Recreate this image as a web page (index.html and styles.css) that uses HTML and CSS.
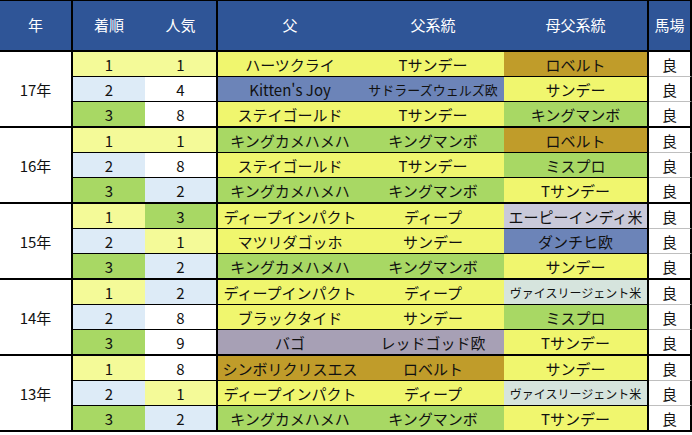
FILE: index.html
```html
<!DOCTYPE html>
<html lang="ja">
<head>
<meta charset="utf-8">
<link rel="stylesheet" href="styles.css">
</head>
<body>
<div class="sheet">
  <div class="head">
    <div class="cell w-year thick">年</div>
    <div class="cell w-rank">着順</div>
    <div class="cell w-pop thick">人気</div>
    <div class="cell w-sire">父</div>
    <div class="cell w-line">父系統</div>
    <div class="cell w-dam thick">母父系統</div>
    <div class="cell w-track thick">馬場</div>
  </div>

  <div class="group">
    <div class="year">17年</div>
    <div class="rows">
      <div class="row">
        <div class="cell w-rank c-ly">1</div>
        <div class="cell w-pop thick c-ly">1</div>
        <div class="cell w-sire c-y">ハーツクライ</div>
        <div class="cell w-line c-y">Tサンデー</div>
        <div class="cell w-dam thick c-gold">ロベルト</div>
        <div class="cell w-track thick">良</div>
      </div>
      <div class="row">
        <div class="cell w-rank c-lb">2</div>
        <div class="cell w-pop thick">4</div>
        <div class="cell w-sire c-blue">Kitten's Joy</div>
        <div class="cell w-line c-blue s13">サドラーズウェルズ欧</div>
        <div class="cell w-dam thick c-y">サンデー</div>
        <div class="cell w-track thick">良</div>
      </div>
      <div class="row">
        <div class="cell w-rank c-g">3</div>
        <div class="cell w-pop thick">8</div>
        <div class="cell w-sire c-y">ステイゴールド</div>
        <div class="cell w-line c-y">Tサンデー</div>
        <div class="cell w-dam thick c-g">キングマンボ</div>
        <div class="cell w-track thick">良</div>
      </div>
    </div>
  </div>

  <div class="group">
    <div class="year">16年</div>
    <div class="rows">
      <div class="row">
        <div class="cell w-rank c-ly">1</div>
        <div class="cell w-pop thick c-ly">1</div>
        <div class="cell w-sire c-g">キングカメハメハ</div>
        <div class="cell w-line c-g">キングマンボ</div>
        <div class="cell w-dam thick c-gold">ロベルト</div>
        <div class="cell w-track thick">良</div>
      </div>
      <div class="row">
        <div class="cell w-rank c-lb">2</div>
        <div class="cell w-pop thick">8</div>
        <div class="cell w-sire c-y">ステイゴールド</div>
        <div class="cell w-line c-y">Tサンデー</div>
        <div class="cell w-dam thick c-g">ミスプロ</div>
        <div class="cell w-track thick">良</div>
      </div>
      <div class="row">
        <div class="cell w-rank c-g">3</div>
        <div class="cell w-pop thick c-lb">2</div>
        <div class="cell w-sire c-g">キングカメハメハ</div>
        <div class="cell w-line c-g">キングマンボ</div>
        <div class="cell w-dam thick c-y">Tサンデー</div>
        <div class="cell w-track thick">良</div>
      </div>
    </div>
  </div>

  <div class="group">
    <div class="year">15年</div>
    <div class="rows">
      <div class="row">
        <div class="cell w-rank c-ly">1</div>
        <div class="cell w-pop thick c-g">3</div>
        <div class="cell w-sire c-y">ディープインパクト</div>
        <div class="cell w-line c-y">ディープ</div>
        <div class="cell w-dam thick c-lav">エーピーインディ米</div>
        <div class="cell w-track thick">良</div>
      </div>
      <div class="row">
        <div class="cell w-rank c-lb">2</div>
        <div class="cell w-pop thick c-ly">1</div>
        <div class="cell w-sire c-y">マツリダゴッホ</div>
        <div class="cell w-line c-y">サンデー</div>
        <div class="cell w-dam thick c-blue">ダンチヒ欧</div>
        <div class="cell w-track thick">良</div>
      </div>
      <div class="row">
        <div class="cell w-rank c-g">3</div>
        <div class="cell w-pop thick c-lb">2</div>
        <div class="cell w-sire c-g">キングカメハメハ</div>
        <div class="cell w-line c-g">キングマンボ</div>
        <div class="cell w-dam thick c-y">サンデー</div>
        <div class="cell w-track thick">良</div>
      </div>
    </div>
  </div>

  <div class="group">
    <div class="year">14年</div>
    <div class="rows">
      <div class="row">
        <div class="cell w-rank c-ly">1</div>
        <div class="cell w-pop thick c-lb">2</div>
        <div class="cell w-sire c-y">ディープインパクト</div>
        <div class="cell w-line c-y">ディープ</div>
        <div class="cell w-dam thick c-gg s12">ヴァイスリージェント米</div>
        <div class="cell w-track thick">良</div>
      </div>
      <div class="row">
        <div class="cell w-rank c-lb">2</div>
        <div class="cell w-pop thick">8</div>
        <div class="cell w-sire c-y">ブラックタイド</div>
        <div class="cell w-line c-y">サンデー</div>
        <div class="cell w-dam thick c-g">ミスプロ</div>
        <div class="cell w-track thick">良</div>
      </div>
      <div class="row">
        <div class="cell w-rank c-g">3</div>
        <div class="cell w-pop thick">9</div>
        <div class="cell w-sire c-pur">バゴ</div>
        <div class="cell w-line c-pur">レッドゴッド欧</div>
        <div class="cell w-dam thick c-y">Tサンデー</div>
        <div class="cell w-track thick">良</div>
      </div>
    </div>
  </div>

  <div class="group">
    <div class="year">13年</div>
    <div class="rows">
      <div class="row">
        <div class="cell w-rank c-ly">1</div>
        <div class="cell w-pop thick">8</div>
        <div class="cell w-sire c-gold">シンボリクリスエス</div>
        <div class="cell w-line c-gold">ロベルト</div>
        <div class="cell w-dam thick c-y">サンデー</div>
        <div class="cell w-track thick">良</div>
      </div>
      <div class="row">
        <div class="cell w-rank c-lb">2</div>
        <div class="cell w-pop thick c-ly">1</div>
        <div class="cell w-sire c-y">ディープインパクト</div>
        <div class="cell w-line c-y">ディープ</div>
        <div class="cell w-dam thick c-gg s12">ヴァイスリージェント米</div>
        <div class="cell w-track thick">良</div>
      </div>
      <div class="row">
        <div class="cell w-rank c-g">3</div>
        <div class="cell w-pop thick c-lb">2</div>
        <div class="cell w-sire c-g">キングカメハメハ</div>
        <div class="cell w-line c-g">キングマンボ</div>
        <div class="cell w-dam thick c-y">Tサンデー</div>
        <div class="cell w-track thick">良</div>
      </div>
    </div>
  </div>
</div>
</body>
</html>
```

FILE: styles.css
```css
* { box-sizing: border-box; }

body {
  margin: 0;
  background: #fff;
  font-family: "Noto Sans CJK JP", "Noto Sans", sans-serif;
  font-size: 15px;
  color: #111;
}

.sheet {
  width: 692px;
  border-top: 1px solid #000;
}

.head {
  display: flex;
  height: 51px;
  background: #2f5597;
  color: #fff;
  border-bottom: 2px solid #000;
}

.head .cell {
  height: 100%;
  padding-bottom: 3px;
  border-bottom: none;
}

.cell {
  display: flex;
  align-items: center;
  justify-content: center;
  height: 25px;
  white-space: nowrap;
  border-bottom: 1px solid #000;
}

.row {
  display: flex;
}

.row:last-child .cell {
  height: 24px;
  border-bottom: none;
}

.row .w-track {
  border-bottom-color: #bfbfbf;
}

.thick { border-right: 2px solid #000; }

.w-year { width: 73px; }
.w-rank { width: 72px; }
.w-pop { width: 73px; }
.w-sire { width: 144px; }
.w-line { width: 142px; }
.w-dam { width: 145px; }
.w-track { width: 43px; }

.group {
  display: flex;
  border-bottom: 2px solid #000;
}

.year {
  width: 73px;
  display: flex;
  align-items: center;
  justify-content: center;
  border-right: 2px solid #000;
  background: #fff;
}

.rows {
  display: flex;
  flex-direction: column;
}

.s13 { font-size: 13px; }
.s12 { font-size: 12px; }

.c-ly { background: #f4fa98; }
.c-y { background: #f0f66e; }
.c-g { background: #a8d864; }
.c-lb { background: #ddebf7; }
.c-gold { background: #c09c2a; }
.c-blue { background: #6c84b8; }
.c-lav { background: #c9c9d9; }
.c-gg { background: #d6e4dd; }
.c-pur { background: #a7a0b5; }
```
